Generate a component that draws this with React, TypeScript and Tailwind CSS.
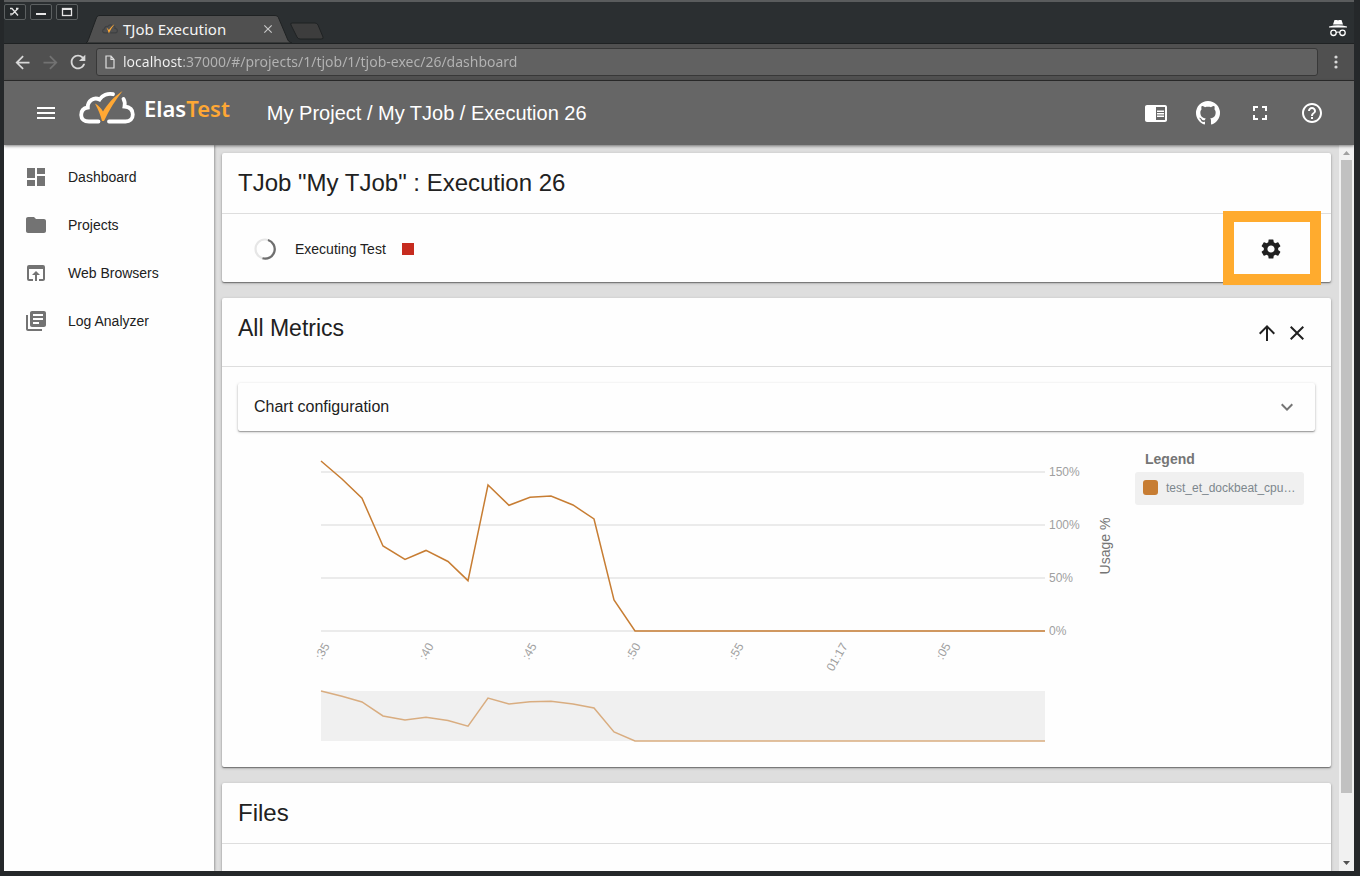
import type { ReactNode } from "react";
import {
  MdArrowBack,
  MdArrowForward,
  MdArrowUpward,
  MdChromeReaderMode,
  MdClose,
  MdDashboard,
  MdExpandMore,
  MdFolder,
  MdFullscreen,
  MdHelpOutline,
  MdLibraryBooks,
  MdMenu,
  MdOpenInBrowser,
  MdRefresh,
  MdSettings,
} from "react-icons/md";

/* ---------- Browser window ---------- */

function WindowButton({ label, children }: { label: string; children: ReactNode }) {
  return (
    <button
      aria-label={label}
      className="flex h-4 w-[22px] items-center justify-center rounded-xs border border-[#5c6061] bg-[#25292b] text-[#e6e6e6]"
    >
      <svg viewBox="0 0 14 10" className="h-[10px] w-[14px]" fill="none" stroke="currentColor" strokeWidth="1.300">
        {children}
      </svg>
    </button>
  );
}

function Cloud({ className, stroke }: { className: string; stroke: string }) {
  return (
    <svg viewBox="0 0 56 34" className={className} fill="none">
      <path
        d="M19.500 30.500H10C5 30.500 2.200 28 2.200 24C2.200 19.500 5 17 8.800 16.500C8.500 10 15 5.500 20.500 8.500C23 4.500 29 1.800 34 3.200"
        stroke={stroke}
        strokeWidth="3.800"
        strokeLinecap="round"
      />
      <path
        d="M44.500 8C46 10.500 46 13 45.500 15.500C51 16 53.800 19 53.800 23.500C53.800 28 51 30.500 46.500 30.500H30"
        stroke={stroke}
        strokeWidth="3.800"
        strokeLinecap="round"
      />
      <path d="M16 12.500C19.500 14.500 22 17 24 20.500C29 12.500 35 5.500 43.500 0C36.500 9 30 19 25 30H23C21.500 24 19.500 19 16 12.500Z" fill="#ffa834" />
    </svg>
  );
}

function TabStrip() {
  return (
    <div className="flex h-[43px] items-start border-t-2 border-[#5a5c5d] bg-[#2b2f31]">
      <div className="flex gap-1 pt-[2px]">
        <WindowButton label="Close window">
          <path d="M2 1.500H4L10 8.500M10 1.500L4 7.500M8 1.500H10.500M3 6V8.500" />
        </WindowButton>
        <WindowButton label="Minimise window">
          <path d="M2 7H12" strokeWidth="2" />
        </WindowButton>
        <WindowButton label="Maximise window">
          <rect x="2.500" y="1.500" width="9" height="7" />
          <path d="M2 2H12" strokeWidth="2" />
        </WindowButton>
      </div>
      <div className="relative ml-2 mt-[13px] -mr-[2px] flex h-7 w-[206px] items-center pr-[17px] pl-4">
        <svg viewBox="0 0 206 28" preserveAspectRatio="none" className="absolute inset-0 h-full w-full">
          <path
            d="M0 28C2 27 2 25 3 23L10 4C11 1 12 .5 14 .5H188C191 .5 192 1 193 4L201 23C202 26 203 27 206 28Z"
            fill="#505050"
            stroke="#1f2223"
          />
        </svg>
        <Cloud className="relative h-[10px] w-4" stroke="#3e4042" />
        <span className="relative ml-[5px] flex-1 whitespace-nowrap font-['Noto_Sans',sans-serif] text-[15px] leading-5 text-[#f4f4f4]">
          TJob Execution
        </span>
        <button aria-label="Close tab" className="relative text-[#c8c8c8]">
          <MdClose size={14} />
        </button>
      </div>
      <button aria-label="New tab" className="mt-5">
        <svg viewBox="0 0 34 18" className="h-[18px] w-[34px]">
          <path d="M2 1H25Q27 1 28 3L33 15Q34 17 31 17H10Q8 17 7 15L1 3Q0 1 2 1Z" fill="#3d3d3d" stroke="#1f2223" />
        </svg>
      </button>
      <svg viewBox="0 0 18 18" className="mr-[7px] ml-auto mt-[18px] h-[18px] w-[18px]" fill="none">
        <path d="M5.500 0H8L9 .6L10 0H12.500L14 4.500H4Z" fill="#fff" />
        <path d="M0 6.500Q9 4 18 6.500V7.500H0Z" fill="#fff" />
        <circle cx="4.500" cy="12.800" r="2.700" stroke="#fff" strokeWidth="1.300" />
        <circle cx="13.500" cy="12.800" r="2.700" stroke="#fff" strokeWidth="1.300" />
        <path d="M7 12.500Q9 11.500 11 12.500" stroke="#fff" strokeWidth="1.200" />
      </svg>
    </div>
  );
}

function AddressBar() {
  return (
    <div className="flex h-[38px] items-center border-t border-b border-t-[#1f2223] border-b-[#2c2c2c] bg-[#505050] pl-1 text-[#d8d8d8]">
      <button aria-label="Back" className="flex w-7 justify-center">
        <MdArrowBack size={21} />
      </button>
      <button aria-label="Forward" className="flex w-7 justify-center text-[#727272]">
        <MdArrowForward size={21} />
      </button>
      <button aria-label="Reload" className="flex w-7 justify-center">
        <MdRefresh size={22} />
      </button>
      <div className="ml-1 flex h-7 flex-1 items-center gap-2 rounded-[3px] border border-[#383838] bg-[#616161] pl-2">
        <svg viewBox="0 0 10 14" className="h-[14px] w-[10px]" fill="none" stroke="#e0e0e0" strokeWidth="1.200">
          <path d="M1 1H6L9 4.500V13H1ZM6 1V4.500H9" />
        </svg>
        <input
          aria-label="Address"
          defaultValue="localhost:37000/#/projects/1/tjob/1/tjob-exec/26/dashboard"
          className="h-full flex-1 bg-[linear-gradient(to_right,#f4f4f4_59px,#b4b4b4_59px)] bg-clip-text pb-[2px] font-['Noto_Sans',sans-serif] text-sm text-transparent outline-none"
        />
      </div>
      <button aria-label="Browser menu" className="flex w-9 justify-center">
        <svg viewBox="0 0 4 14" className="h-[14px] w-1" fill="currentColor">
          <circle cx="2" cy="2" r="1.600" />
          <circle cx="2" cy="7" r="1.600" />
          <circle cx="2" cy="12" r="1.600" />
        </svg>
      </button>
    </div>
  );
}

/* ---------- Application shell ---------- */

function GithubMark() {
  return (
    <svg viewBox="2 2 20 20" className="h-6 w-6" fill="currentColor">
      <path d="M12 2A10 10 0 0 0 2 12c0 4.420 2.870 8.170 6.840 9.500.5.080.66-.23.66-.5v-1.690c-2.770.6-3.360-1.340-3.360-1.340-.46-1.160-1.110-1.470-1.110-1.470-.91-.62.070-.6.070-.6 1 .070 1.530 1.030 1.530 1.030.87 1.520 2.340 1.070 2.910.83.090-.65.35-1.090.63-1.340-2.220-.25-4.550-1.110-4.550-4.920 0-1.110.38-2 1.030-2.710-.1-.25-.45-1.290.1-2.640 0 0 .84-.27 2.750 1.020.79-.22 1.650-.33 2.500-.33s1.710.11 2.500.33c1.910-1.290 2.750-1.020 2.750-1.020.55 1.350.2 2.390.1 2.640.65.71 1.030 1.600 1.030 2.710 0 3.820-2.340 4.660-4.570 4.910.36.31.69.92.69 1.850V21c0 .27.16.59.67.5C19.140 20.160 22 16.420 22 12A10 10 0 0 0 12 2z" />
    </svg>
  );
}

function HeaderButton({ label, children }: { label: string; children: ReactNode }) {
  return (
    <button aria-label={label} className="flex h-10 w-10 items-center justify-center">
      {children}
    </button>
  );
}

function Header() {
  return (
    <header className="relative z-10 flex h-16 shrink-0 items-center bg-[#666] pr-[22px] pl-[22px] text-white shadow-[0_1px_3px_rgba(0,0,0,0.5)]">
      <button aria-label="Toggle menu" className="flex w-10 justify-center">
        <MdMenu size={24} />
      </button>
      <a href="#/" className="ml-[13px] flex h-full items-center gap-[9px] pb-[10px]">
        <Cloud className="h-[34px] w-14" stroke="#fff" />
        <span className="font-['Noto_Sans',sans-serif] text-[22px] leading-8 font-semibold">
          Elas<span className="text-[#ffa834]">Test</span>
        </span>
      </a>
      <h1 className="ml-[37px] text-xl whitespace-nowrap">My Project / My TJob / Execution 26</h1>
      <div className="ml-auto flex gap-3">
        <HeaderButton label="Reader">
          <MdChromeReaderMode size={24} />
        </HeaderButton>
        <HeaderButton label="GitHub">
          <GithubMark />
        </HeaderButton>
        <HeaderButton label="Fullscreen">
          <MdFullscreen size={24} />
        </HeaderButton>
        <HeaderButton label="Help">
          <MdHelpOutline size={24} />
        </HeaderButton>
      </div>
    </header>
  );
}

const links = [
  { label: "Dashboard", Icon: MdDashboard },
  { label: "Projects", Icon: MdFolder },
  { label: "Web Browsers", Icon: MdOpenInBrowser },
  { label: "Log Analyzer", Icon: MdLibraryBooks },
];

function Sidebar() {
  return (
    <nav className="w-[210px] shrink-0 bg-[#fefefe] pt-2 shadow-[1px_0_2px_rgba(0,0,0,0.3)]">
      {links.map(({ label, Icon }) => (
        <a key={label} href="#/" className="flex h-12 items-center gap-5 pl-5 text-sm">
          <Icon size={24} className="text-[#737373]" />
          {label}
        </a>
      ))}
    </nav>
  );
}

function Card({ children, className = "" }: { children: ReactNode; className?: string }) {
  return (
    <section className={`relative shrink-0 rounded-xs bg-[#fefefe] shadow-[0_1px_3px_rgba(0,0,0,0.3),0_1px_1px_rgba(0,0,0,0.35)] ${className}`}>
      {children}
    </section>
  );
}

/* ---------- Metrics chart ---------- */

type Point = [x: number, percent: number];

const usage: Point[] = [
  [83, 160.4], [104, 143.4], [124, 125.2], [145, 80.2], [167, 67.5], [188, 76],
  [210, 65.6], [230, 47.5], [250, 137.7], [271, 118.6], [292, 126.1], [313, 127.4],
  [335, 118.9], [356, 105.7], [376, 29.3], [397, 0], [807, 0],
];

const yTicks = [150, 100, 50, 0];
const xTicks = [
  { x: 92, label: ":35" },
  { x: 196, label: ":40" },
  { x: 299, label: ":45" },
  { x: 403, label: ":50" },
  { x: 506, label: ":55" },
  { x: 610, label: "01:17" },
  { x: 713, label: ":05" },
];

const yMain = (percent: number) => 184 - percent * 1.06;
const yMini = (percent: number) => 294 - percent * 0.312;
const trace = (y: (percent: number) => number) => usage.map(([x, p]) => `${x},${y(p)}`).join(" ");

function UsageChart() {
  return (
    <svg viewBox="0 0 882 304" className="min-w-0 flex-1" role="img" aria-label="CPU usage over time">
      {yTicks.map((tick) => (
        <g key={tick}>
          <line x1="83" x2="807" y1={yMain(tick)} y2={yMain(tick)} stroke="#e4e4e4" strokeWidth="1.500" />
          <text x="811" y={yMain(tick) + 4} fontSize="12" fill="#a0a0a0">
            {tick}%
          </text>
        </g>
      ))}
      <polyline points={trace(yMain)} fill="none" stroke="#c77d33" strokeWidth="1.500" />
      {xTicks.map(({ x, label }) => (
        <text key={label} transform={`translate(${x} 199) rotate(-60)`} textAnchor="end" fontSize="12" fill="#a0a0a0">
          {label}
        </text>
      ))}
      <text transform="translate(872 99) rotate(-90)" textAnchor="middle" fontSize="14" fill="#757575">
        Usage %
      </text>
      <rect x="83" y="244" width="724" height="50" fill="#f0f0f0" />
      <polyline points={trace(yMini)} fill="none" stroke="#d9ad80" strokeWidth="1.500" />
    </svg>
  );
}

function Legend() {
  return (
    <div className="mr-[11px] w-[169px] shrink-0 pt-1">
      <h3 className="pl-[10px] text-sm leading-4 font-bold text-[#757575]">Legend</h3>
      <div className="mt-[5px] flex h-[33px] items-center gap-2 rounded-[3px] bg-[#f0f0f0] pb-[2px] pl-2">
        <span className="h-[15px] w-[15px] shrink-0 rounded-[3px] bg-[#c77d33]" />
        <span className="text-xs whitespace-nowrap text-[#7d878d]">test_et_dockbeat_cpu…</span>
      </div>
    </div>
  );
}

function Spinner() {
  return (
    <svg viewBox="0 0 22 22" className="h-[22px] w-[22px]" fill="none" strokeWidth="2.200">
      <circle cx="11" cy="11" r="9.500" stroke="#e6e6e6" />
      <path d="M14 2A9.500 9.500 0 0 1 8.500 20.200" stroke="#6e6e6e" />
    </svg>
  );
}

function Scrollbar() {
  return (
    <div className="flex w-[15px] shrink-0 flex-col items-center justify-between bg-[#f1f1f1]" aria-hidden="true">
      <svg viewBox="0 0 15 15" className="h-[15px] w-[15px]">
        <path d="M4 10H11L7.500 6Z" fill="#a0a0a0" />
      </svg>
      <div className="flex min-h-0 w-full flex-1 justify-center">
        <div className="h-[91%] w-[11px] bg-[#c1c1c1]" />
      </div>
      <svg viewBox="0 0 15 15" className="h-[15px] w-[15px]">
        <path d="M4 5H11L7.500 9Z" fill="#505050" />
      </svg>
    </div>
  );
}

export default function App() {
  return (
    <div className="flex h-screen flex-col overflow-hidden border-r-[6px] border-b-[5px] border-l-4 border-[#25282a] font-['Liberation_Sans',Arial,sans-serif] text-[#212121]">
      <TabStrip />
      <AddressBar />
      <Header />
      <div className="flex min-h-0 flex-1 bg-[#dedede]">
        <Sidebar />
        <main className="flex min-w-0 flex-1 flex-col gap-4 overflow-hidden px-2 pt-2">
          <Card>
            <h2 className="border-b border-[#dedede] p-4 text-2xl leading-7">TJob "My TJob" : Execution 26</h2>
            <div className="flex h-[68px] items-center pt-[2px] pr-12 pl-8 text-sm">
              <Spinner />
              <span className="ml-[19px]">Executing Test</span>
              <button aria-label="Stop execution" className="ml-4 h-3 w-3 bg-[#c62b1f]" />
              <button aria-label="Settings" className="ml-auto">
                <MdSettings size={24} />
              </button>
            </div>
            <div className="pointer-events-none absolute top-[58px] right-[10px] h-[74px] w-[98px] border-11 border-[#ffab2e]" />
          </Card>

          <Card>
            <div className="flex h-[69px] items-start justify-between border-b border-[#dedede] py-4 pr-[22px] pl-4">
              <h2 className="text-[23px] leading-7">All Metrics</h2>
              <div className="flex gap-[6px] pt-[7px]">
                <button aria-label="Move up">
                  <MdArrowUpward size={24} />
                </button>
                <button aria-label="Remove">
                  <MdClose size={24} />
                </button>
              </div>
            </div>
            <div className="p-4">
              <button className="flex h-12 w-full items-center justify-between rounded-xs pr-4 pl-4 text-left text-base shadow-[0_1px_3px_rgba(0,0,0,0.25),0_1px_1px_rgba(0,0,0,0.25)]">
                Chart configuration
                <MdExpandMore size={24} className="text-[#757575]" />
              </button>
              <div className="mt-4 flex items-start gap-[15px]">
                <UsageChart />
                <Legend />
              </div>
            </div>
          </Card>

          <Card className="h-40">
            <h2 className="border-b border-[#dedede] p-4 text-2xl leading-7">Files</h2>
          </Card>
        </main>
        <Scrollbar />
      </div>
    </div>
  );
}
